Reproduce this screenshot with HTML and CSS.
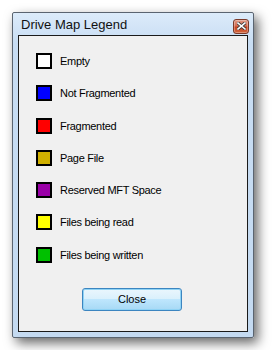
FILE: index.html
```html
<!doctype html>
<html lang="en">
<head>
<meta charset="utf-8" />
<title>Drive Map Legend</title>
<link rel="stylesheet" href="styles.css">
</head>
<body>
  <div class="window">
    <!-- title bar -->
    <div class="titlebar">
      <span class="title">Drive Map Legend</span>
      <div class="close-x" title="Close">
        <svg width="9" height="8" viewBox="0 0 9 8">
          <path d="M1 1 L8 7 M8 1 L1 7" stroke="#3a3a3a" stroke-width="3.2" stroke-linecap="square"/>
          <path d="M1 1 L8 7 M8 1 L1 7" stroke="#fff" stroke-width="1.6" stroke-linecap="square"/>
        </svg>
      </div>
    </div>

    <!-- legend -->
    <div class="client">
      <ul class="legend">
        <li><span class="swatch empty"></span>Empty</li>
        <li><span class="swatch notfrag"></span>Not Fragmented</li>
        <li><span class="swatch frag"></span>Fragmented</li>
        <li><span class="swatch pagefile"></span>Page File</li>
        <li><span class="swatch mft"></span>Reserved MFT Space</li>
        <li><span class="swatch reading"></span>Files being read</li>
        <li><span class="swatch writing"></span>Files being written</li>
      </ul>
      <div class="actions">
        <button class="btn">Close</button>
      </div>
    </div>
  </div>
</body>
</html>
```

FILE: styles.css
```css
*{margin:0;padding:0;box-sizing:border-box}
body{
  background:#fff;padding:12px;
  font-family:"Liberation Sans",Arial,sans-serif;
}

/* === window frame === */
.window{
  width:242px;height:326px;
  display:flex;flex-direction:column;
  border:1px solid #5a6470;border-radius:2px;
  padding:0 5px 5px 5px;
  background:linear-gradient(#dcebfa,#c8ddf3 30px,#c4daf1);
  box-shadow:4px 5px 12px rgba(0,0,0,.6);
}

/* === title bar === */
.titlebar{
  height:22px;display:flex;align-items:center;justify-content:space-between;
}
.title{font-size:13px;color:#111;padding-left:3px}
.close-x{
  width:16px;height:15px;margin-top:4px;margin-right:-1px;
  display:flex;align-items:center;justify-content:center;
  border:1px solid #7a3a2a;border-radius:3px;
  background:linear-gradient(#e09a86,#d26a50 45%,#c4421f 55%,#d4683f);
  box-shadow:inset 0 0 0 1px rgba(255,255,255,.3);
}

/* === client area === */
.client{
  flex:1;display:flex;flex-direction:column;
  background:#f0f0f0;border:1px solid #1a1a1a;
  padding:17px 0 0 17px;
}
.legend{list-style:none;display:flex;flex-direction:column;gap:16.3px}
.legend li{display:flex;align-items:center;gap:8px;height:16px;font-size:11px;color:#000;letter-spacing:-.3px}
.swatch{width:16px;height:16px;border:2px solid #000;flex:none}
.empty{background:#fff}
.notfrag{background:#0000ff}
.frag{background:#ff0000}
.pagefile{background:#d0b000}
.mft{background:#9a00a8}
.reading{background:#ffff00}
.writing{background:#00c000}

/* === close button === */
.actions{display:flex;justify-content:center;padding-right:19px;margin-top:25px}
.btn{
  width:100px;height:23px;
  font-family:inherit;font-size:11px;color:#000;
  border:1px solid #3c85c0;border-radius:3px;
  background:linear-gradient(#eaf6fd,#d9f0fc 50%,#bee6fd 50%,#a7d9f5);
  box-shadow:inset 0 0 0 1px #8fd3f5;
}
```
